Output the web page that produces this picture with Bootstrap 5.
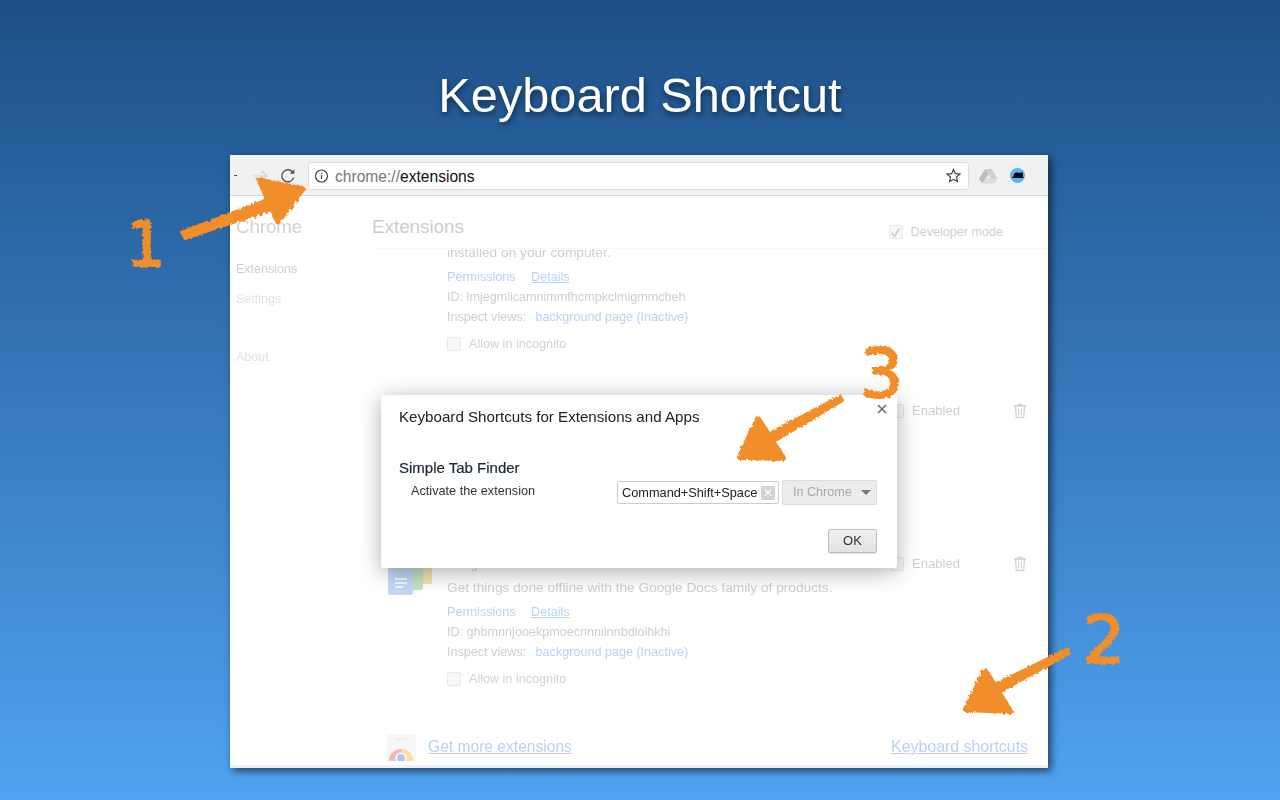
<!DOCTYPE html>
<html lang="en">
<head>
    <meta charset="UTF-8" />
    <meta name="viewport" content="width=device-width, initial-scale=1.0" />
    <title>Keyboard Shortcut</title>
    <link href="https://cdn.jsdelivr.net/npm/bootstrap@5.3.0/dist/css/bootstrap.min.css" rel="stylesheet" />
    <style>
        html, body {
            height: 800px;
            overflow: hidden;
        }

        body {
            background: linear-gradient(180deg, #1d4f87 0%, #50a3f1 100%);
            font-family: "Liberation Sans", Arial, sans-serif;
        }

        .page-title {
            height: 155px;
            padding-top: 64px;
            margin: 0;
            color: #fff;
            font-family: "Liberation Sans", Arial, sans-serif;
            font-size: 48.7px;
            line-height: 62px;
            font-weight: 400;
            text-shadow: 1px 3px 6px rgba(0, 0, 0, .55);
        }

        /* browser window */
        .browser {
            width: 818px;
            height: 613px;
            margin-left: 230px;
            background: #fff;
            border-bottom: 3px solid #eef2f2;
            box-shadow: 3px 3px 8px rgba(0, 0, 0, .6);
            filter: blur(.3px);
        }

        .toolbar {
            height: 41px;
            background: #f1f1f1;
            border-bottom: 1px solid #d9d9d9;
            padding: 7px 0 6px 4px;
        }

        .tick {
            width: 3px;
            height: 1px;
            background: #555;
            margin-right: 16px;
        }

        .reload-icon {
            margin-left: 12px;
        }

        .omnibox {
            width: 661px;
            height: 28px;
            margin-left: 12px;
            padding: 0 7px 0 5px;
            background: #fff;
            border: 1px solid #dcdcdc;
            border-radius: 3px;
            font-size: 15.6px;
            color: #777;
        }

        .omnibox-text {
            margin-left: 2px;
            padding-top: 2px;
        }

        .omnibox b {
            font-weight: 400;
            color: #111;
        }

        .toolbar-ext {
            margin-left: 10px;
        }

        .toolbar-ext.last-ext {
            margin-left: 12px;
        }

        /* faded page behind the dialog */
        .side-col {
            width: 142px;
            padding: 18px 0 0 6px;
            color: #d6d6d6;
            font-size: 12.5px;
        }

        .side-head {
            font-size: 18.6px;
            line-height: 26px;
            color: #d2d2d2;
            margin-bottom: 19px;
        }

        .side-item {
            line-height: 20px;
            height: 30px;
            color: #cfcfcf;
        }

        .side-item.dim {
            color: #e0e0e0;
        }

        .side-item.gap {
            height: 20px;
            margin-top: 28px;
        }

        .main-col {
            width: 676px;
            height: 572px;
        }

        .main-head {
            height: 53px;
            padding: 18px 45px 0 0;
            border-bottom: 1px solid #f7f7f7;
            position: relative;
            z-index: 1;
        }

        .main-title {
            font-size: 18.8px;
            line-height: 26px;
            color: #cdcdcd;
        }

        .ext-list {
            height: 472px;
            padding-left: 75px;
            padding-right: 20px;
            font-size: 12.6px;
            line-height: 20px;
            color: #cfcfcf;
            overflow: hidden;
        }

        .ext-row {
            position: relative;
        }

        .ext-row:first-child {
            margin-top: -6px;
            height: 158px;
        }

        .ext-row.middle {
            height: 0;
        }

        .ext-row.last {
            margin-top: 153px;
        }

        .ext-title {
            height: 20px;
        }

        .ext-desc {
            font-size: 13.7px;
            margin-top: 4px;
            margin-bottom: 4px;
        }

        .ext-row:first-child .ext-desc {
            margin-top: 0;
        }

        .ext-link {
            color: #bcd1f5;
            text-decoration: none;
        }

        .ext-link.under {
            text-decoration: underline;
            margin-left: 12px;
        }

        .views-link {
            margin-left: 6px;
        }

        .allow-line {
            margin-top: 7px;
            color: #d2d2d2;
        }

        .fake-check {
            width: 14px;
            height: 14px;
            background: #f8f8f8;
            border: 1px solid #e8e8e8;
            border-radius: 2px;
            flex: none;
        }

        .dev-toggle {
            color: #cfcfcf;
            font-size: 12.6px;
            line-height: 20px;
            margin-top: 8px;
        }

        .row-enabled {
            position: absolute;
            right: 1px;
            top: 0;
            gap: 8px;
            color: #cfcfcf;
            font-size: 13.1px;
            line-height: 20px;
        }

        .trash-gap {
            margin-left: 45px;
        }

        .docs-icon {
            position: absolute;
            left: -59px;
            top: 0;
        }

        .foot-row {
            position: absolute;
            left: 156px;
            right: 20px;
            bottom: 4px;
            height: 28px;
        }

        .foot-link {
            color: #bad0f7;
            text-decoration: underline;
        }

        .foot-link.big {
            font-size: 15.6px;
        }

        .foot-link.mid {
            font-size: 15.9px;
        }

        /* dialog */
        .shortcut-dialog {
            left: 151px;
            top: 240px;
            width: 516px;
            height: 173px;
            padding: 12px 20px 0 18px;
            background: #fff;
            border-radius: 3px;
            box-shadow: 0 4px 22px rgba(0, 0, 0, .33);
            z-index: 2;
        }

        .dialog-title {
            font-size: 15.15px;
            line-height: 20px;
            color: #222;
            margin-bottom: 31px;
        }

        .dialog-ext {
            font-size: 15px;
            line-height: 20px;
            color: #1b2733;
            -webkit-text-stroke: .2px #1b2733;
        }

        .dialog-line {
            margin-top: 2px;
        }

        .dialog-cmd {
            font-size: 12.7px;
            color: #333;
            padding-left: 12px;
            margin-bottom: 2px;
        }

        .key-box {
            width: 162px;
            height: 23px;
            padding: 0 3px 0 4px;
            border: 1px solid #ccc;
            border-radius: 2px;
            font-size: 12.75px;
            color: #222;
        }

        .key-clear {
            width: 14px;
            height: 14px;
            background: #d4d4d4;
            color: #fff;
            font-size: 12px;
            line-height: 14px;
            border-radius: 1px;
        }

        .scope-box {
            width: 95px;
            height: 25px;
            margin-left: 3px;
            padding: 0 5px 0 10px;
            background: #ececec;
            border: 1px solid #dcdcdc;
            border-radius: 2px;
            font-size: 12.6px;
            color: #a8a8a8;
        }

        .scope-caret {
            width: 0;
            height: 0;
            border-left: 5px solid transparent;
            border-right: 5px solid transparent;
            border-top: 5px solid #777;
        }

        .dialog-close {
            position: absolute;
            right: 10px;
            top: 9px;
        }

        .ok-btn {
            position: absolute;
            right: 20px;
            bottom: 15px;
            width: 49px;
            height: 24px;
            padding: 0;
            font-size: 13px;
            line-height: 22px;
            color: #333;
            background: linear-gradient(#f0f0f0, #e2e2e2);
            border: 1px solid #bdbdbd;
            border-radius: 2px;
            box-shadow: 0 1px 1px rgba(0, 0, 0, .12);
        }

        /* hand drawn notes on top of the shot */
        .scribble {
            position: absolute;
            left: 0;
            top: 0;
            z-index: 5;
            pointer-events: none;
        }

        .scribble text {
            font-family: "DejaVu Sans", sans-serif;
            fill: #f28e2b;
            stroke: #f28e2b;
        }
    </style>
</head>
<body>

    <h1 class="page-title text-center">Keyboard Shortcut</h1>

    <div class="browser position-relative">

        <!-- Toolbar -->
        <div class="toolbar d-flex align-items-center">
            <span class="tick"></span>
            <svg width="15" height="12" viewBox="0 0 15 12" fill="none" stroke="#cfcfcf" stroke-width="1.2"><path d="M0 6h14M9 1l5 5-5 5"/></svg>
            <svg class="reload-icon" width="16" height="16" viewBox="0 0 16 16" fill="none" stroke="#555" stroke-width="1.5"><path d="M13.6 9.6A6 6 0 1 1 12.4 3.9"/><path d="M14.4 1.2v4.6H9.8z" fill="#555" stroke="none"/></svg>
            <div class="omnibox d-flex align-items-center">
                <svg class="me-1" width="15" height="15" viewBox="0 0 15 15" fill="none" stroke="#444" stroke-width="1.2"><circle cx="7.5" cy="8" r="6"/><path d="M7.5 7.1v4M7.5 4.700v1.300"/></svg>
                <span class="omnibox-text">chrome://<b>extensions</b></span>
                <svg class="ms-auto" width="15" height="15" viewBox="0 0 16 16" fill="none" stroke="#444" stroke-width="1.3"><path d="M8 1.5l2 4.5 4.8.5-3.6 3.2 1 4.8L8 12.1l-4.2 2.4 1-4.8L1.200 6.500 6 6z"/></svg>
            </div>
            <svg class="toolbar-ext" width="19" height="16" viewBox="0 0 19 16"><path d="M6.300 1h6.400l6 10h-6.400z" fill="#cfcfcf"/><path d="M6.300 1l3.200 5.300L3.300 15.500 0 10.500z" fill="#bdbdbd"/><path d="M3.300 15.500l3-5h12.400l-3 5z" fill="#dcdcdc"/></svg>
            <svg class="toolbar-ext last-ext" width="15" height="15" viewBox="0 0 15 15"><circle cx="7.500" cy="7.500" r="7.500" fill="#5cb2f2"/><path d="M1.500 10c.5-.6 1.200-.8 1.800-1 .3-2 1-4.200 2.600-4.500 1.400-.3 2.600.4 4 .3 1-.1 2-.4 3 0v4.300c.5 0 .8.400 1 1z" fill="#0b0b0b"/></svg>
        </div>

        <div class="d-flex">
            <!-- Sidebar -->
            <div class="side-col">
                <div class="side-head">Chrome</div>
                <div class="side-item">Extensions</div>
                <div class="side-item dim">Settings</div>
                <div class="side-item dim gap">About</div>
            </div>

            <!-- Extension list -->
            <div class="main-col">
                <div class="main-head d-flex justify-content-between bg-white">
                    <div class="main-title">Extensions</div>
                    <div class="dev-toggle d-flex align-items-center gap-2 align-self-start">
                        <span class="fake-check d-flex align-items-center justify-content-center">
                            <svg width="11" height="11" viewBox="0 0 11 11" fill="none" stroke="#cfcfcf" stroke-width="2"><path d="M1.500 6l3 3 5-7.500"/></svg>
                        </span>
                        <span>Developer mode</span>
                    </div>
                </div>

                <div class="ext-list">
                    <div class="ext-row">
                        <div class="ext-desc">installed on your computer.</div>
                        <div><a class="ext-link">Permissions</a> <a class="ext-link under">Details</a></div>
                        <div>ID: lmjegmlicamnimmfhcmpkclmigmmcbeh</div>
                        <div>Inspect views: <a class="ext-link views-link">background page (Inactive)</a></div>
                        <div class="allow-line d-flex align-items-center gap-2"><span class="fake-check"></span>Allow in incognito</div>
                    </div>

                    <div class="ext-row middle">
                        <div class="row-enabled d-flex align-items-center">
                            <span class="fake-check"></span><span>Enabled</span>
                            <svg class="trash-gap" width="14" height="16" viewBox="0 0 14 16" fill="none" stroke="#d4d4d4" stroke-width="1.300"><path d="M1 3h12M5 3V1.500h4V3M2.500 3l.8 11.500h7.400L11.500 3M5.500 5.500v7M8.500 5.500v7"/></svg>
                        </div>
                    </div>

                    <div class="ext-row last">
                        <svg class="docs-icon" width="46" height="44" viewBox="0 0 46 44"><rect x="24" y="0" width="20" height="30" rx="2" fill="#f6e2ad"/><rect x="10" y="0" width="25" height="36" rx="2" fill="#c3e2c9"/><rect x="0" y="0" width="25" height="41" rx="2" fill="#c3d7f7"/><path d="M7 25h12M7 29h12M7 33h8" stroke="#fff" stroke-width="1.500"/></svg>
                        <div class="ext-title">Google Docs Offline</div>
                        <div class="row-enabled d-flex align-items-center">
                            <span class="fake-check"></span><span>Enabled</span>
                            <svg class="trash-gap" width="14" height="16" viewBox="0 0 14 16" fill="none" stroke="#d4d4d4" stroke-width="1.300"><path d="M1 3h12M5 3V1.500h4V3M2.500 3l.8 11.500h7.400L11.500 3M5.500 5.500v7M8.500 5.500v7"/></svg>
                        </div>
                        <div class="ext-desc">Get things done offline with the Google Docs family of products.</div>
                        <div><a class="ext-link">Permissions</a> <a class="ext-link under">Details</a></div>
                        <div>ID: ghbmnnjooekpmoecnnnilnnbdlolhkhi</div>
                        <div>Inspect views: <a class="ext-link views-link">background page (Inactive)</a></div>
                        <div class="allow-line d-flex align-items-center gap-2"><span class="fake-check"></span>Allow in incognito</div>
                    </div>
                </div>
            </div>
        </div>

        <!-- Page footer -->
        <div class="foot-row d-flex align-items-center justify-content-between">
            <div class="d-flex align-items-center gap-2">
                <svg class="me-1" width="30" height="27" viewBox="0 0 30 27"><rect width="30" height="27" fill="#f7f7f7"/><path d="M10 5h10" stroke="#eee" stroke-width="2"/><path d="M3 27a12 12 0 0 1 24 0z" fill="#f3b8ae"/><path d="M15 15a12 12 0 0 1 12 12h-8z" fill="#f8e3a4"/><path d="M3 27h6l2-3z" fill="#bfe0c5"/><circle cx="15" cy="24" r="5.500" fill="#fff"/><circle cx="15" cy="24" r="4" fill="#a9c8f5"/></svg>
                <a class="foot-link big">Get more extensions</a>
            </div>
            <a class="foot-link mid">Keyboard shortcuts</a>
        </div>

        <!-- Dialog -->
        <div class="shortcut-dialog position-absolute">
            <div class="dialog-title">Keyboard Shortcuts for Extensions and Apps</div>
            <svg class="dialog-close" width="10" height="10" viewBox="0 0 10 10" fill="none" stroke="#666" stroke-width="1.500"><path d="M1 1l8 8M9 1l-8 8"/></svg>
            <div class="dialog-ext">Simple Tab Finder</div>
            <div class="dialog-line d-flex align-items-center justify-content-between">
                <div class="dialog-cmd">Activate the extension</div>
                <div class="d-flex align-items-center">
                    <div class="key-box d-flex align-items-center justify-content-between">
                        <span>Command+Shift+Space</span>
                        <span class="key-clear text-center">✕</span>
                    </div>
                    <div class="scope-box d-flex align-items-center justify-content-between">
                        <span>In Chrome</span>
                        <span class="scope-caret"></span>
                    </div>
                </div>
            </div>
            <button type="button" class="btn ok-btn">OK</button>
        </div>
    </div>

    <!-- Orange notes -->
    <svg class="scribble" width="1280" height="800" viewBox="0 0 1280 800">
        <defs>
            <filter id="chalk" x="-10%" y="-10%" width="120%" height="120%">
                <feTurbulence type="fractalNoise" baseFrequency="0.35" numOctaves="2" seed="4" result="n"/>
                <feDisplacementMap in="SourceGraphic" in2="n" scale="4"/>
            </filter>
        </defs>
        <g filter="url(#chalk)" fill="#f28e2b" stroke="#f28e2b" stroke-linejoin="round">
            <path d="M181 232L267 199L272 210L185 239Z" stroke-width="2"/>
            <path d="M259 180L303 189L278 222Z" stroke-width="5"/>
            <path d="M1068 648L990 686L994 696L1070 654Z" stroke-width="1.500"/>
            <path d="M985 671L966 709L1010 711Z" stroke-width="6"/>
            <path d="M841 395L767 434L771 444L843 401Z" stroke-width="1.500"/>
            <path d="M758 419L740 457L783 458Z" stroke-width="6"/>
            <text x="126" y="266" font-size="62" stroke-width="2">1</text>
            <text x="1083" y="663" font-size="66" stroke-width="2">2</text>
            <text x="860" y="397" font-size="68" stroke-width="2">3</text>
        </g>
    </svg>

</body>
</html>
